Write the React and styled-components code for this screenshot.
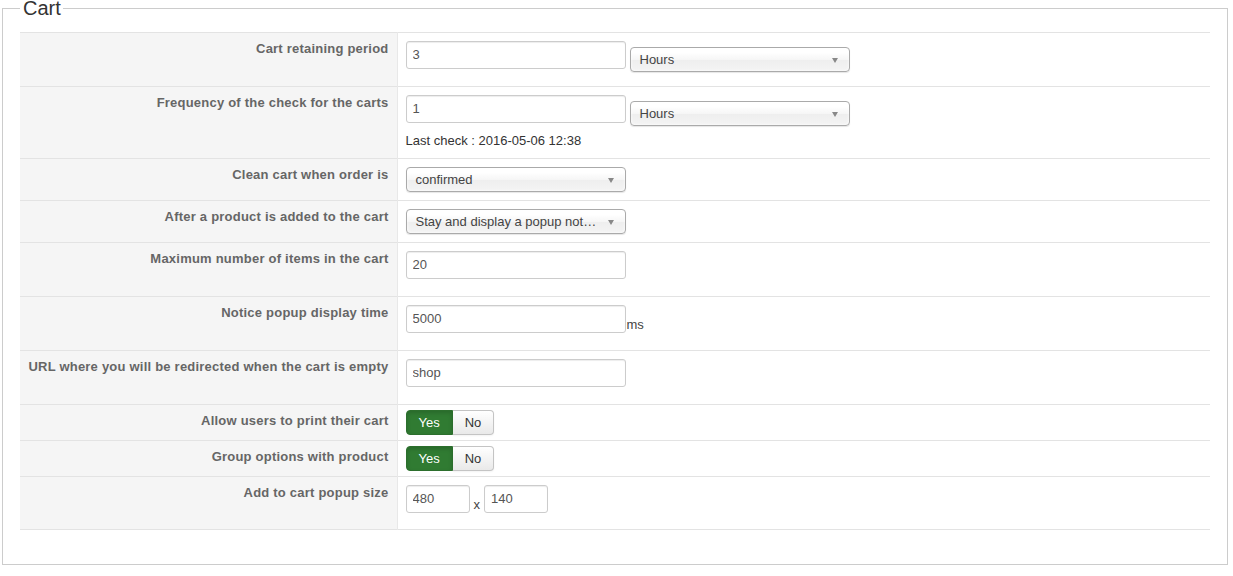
import React from 'react'
import styled, { createGlobalStyle } from 'styled-components'

const GlobalStyle = createGlobalStyle`
  html, body {
    margin: 0;
    padding: 0;
    background: #fff;
  }
  body {
    font-family: Arial, "Liberation Sans", Helvetica, sans-serif;
    font-size: 13px;
    color: #333;
  }
`

const Fieldset = styled.fieldset`
  box-sizing: border-box;
  width: 1226px;
  margin: 0 0 0 2px;
  padding: 15px 17px 34px 17px;
  border: 1px solid #ccc;
  min-width: 0;
`

const Legend = styled.legend`
  padding: 0 2px 0 3px;
  margin-left: 0;
  font-size: 20px;
  line-height: 17px;
  color: #333;
`

const Table = styled.table`
  width: 100%;
  border-collapse: collapse;
  border-bottom: 1px solid #e3e3e3;
`

const Row = styled.tr`
  border-top: 1px solid #e3e3e3;
`

const Key = styled.td`
  box-sizing: border-box;
  width: 377px;
  padding: 8px 8px 8px 4px;
  background: #f5f5f5;
  border-right: 1px solid #e8e8e8;
  text-align: right;
  vertical-align: top;
  white-space: nowrap;
  font-weight: bold;
  font-size: 13px;
  line-height: 15px;
  letter-spacing: 0.22px;
  color: #666;
`

const Value = styled.td`
  padding: ${(p) => (p.$compact ? '5px 8px' : p.$last ? '8px 8px 7px' : '8px')};
  vertical-align: top;
  line-height: 18px;
`

const Line = styled.div`
  display: flex;
  align-items: flex-start;
  gap: ${(p) => p.$gap || 4}px;
`

const TextInput = styled.input`
  box-sizing: border-box;
  width: ${(p) => p.$width || 220}px;
  height: 28px;
  margin: 0 0 9px 0;
  padding: 3px 6px 5px 6px;
  border: 1px solid #ccc;
  border-radius: 3px;
  box-shadow: inset 0 1px 1px rgba(0, 0, 0, 0.075);
  font-family: Arial, "Liberation Sans", sans-serif;
  font-size: 13px;
  line-height: 18px;
  color: #555;
  background: #fff;
  outline: none;
`

const Chosen = styled.div`
  box-sizing: border-box;
  position: relative;
  width: 220px;
  height: 25px;
  margin-top: ${(p) => p.$offset || 0}px;
  padding: 0 28px 0 9px;
  border: 1px solid #aaa;
  border-radius: 4px;
  background: linear-gradient(#fff 20%, #f6f6f6 50%, #eee 52%, #f4f4f4 100%);
  box-shadow: inset 0 0 3px #fff, 0 1px 1px rgba(0, 0, 0, 0.1);
  color: #444;
  font-size: 13px;
  line-height: 23px;
  white-space: nowrap;
  overflow: hidden;
  text-overflow: ellipsis;
  cursor: pointer;

  &::after {
    content: '';
    position: absolute;
    right: 11px;
    top: 10px;
    border-left: 3.5px solid transparent;
    border-right: 3.5px solid transparent;
    border-top: 5px solid #888;
  }
`

const Note = styled.div`
  color: #333;
  font-size: 13px;
  line-height: 18px;
`

const Suffix = styled.span`
  padding-top: ${(p) => p.$top || 0}px;
  color: #444;
  font-size: 13px;
`

const Toggle = styled.div`
  display: inline-flex;
`

const ToggleButton = styled.button`
  box-sizing: border-box;
  height: 25px;
  padding: 0 12px;
  margin: 0;
  font-family: Arial, "Liberation Sans", sans-serif;
  font-size: 13px;
  line-height: 23px;
  cursor: pointer;
  border: 1px solid ${(p) => (p.$active ? '#2c6f2d' : '#c4c4c4')};
  color: ${(p) => (p.$active ? '#fff' : '#333')};
  background: ${(p) =>
    p.$active ? '#307b32' : 'linear-gradient(#fff, #e9e9e9)'};
  box-shadow: ${(p) =>
    p.$active ? 'inset 0 2px 4px rgba(0,0,0,0.15)' : '0 1px 2px rgba(0,0,0,0.05)'};

  &:first-child {
    border-radius: 4px 0 0 4px;
  }
  &:last-child {
    border-radius: 0 4px 4px 0;
    border-left: 0;
  }
`

const YesNo = ({ value = true }) => (
  <Toggle>
    <ToggleButton $active={value}>Yes</ToggleButton>
    <ToggleButton $active={!value}>No</ToggleButton>
  </Toggle>
)

export default function App() {
  return (
    <>
      <GlobalStyle />
      <Fieldset>
        <Legend>Cart</Legend>
        <Table>
          <tbody>
            <Row>
              <Key>Cart retaining period</Key>
              <Value>
                <Line>
                  <TextInput defaultValue="3" />
                  <Chosen $offset={6}>Hours</Chosen>
                </Line>
              </Value>
            </Row>
            <Row>
              <Key>Frequency of the check for the carts</Key>
              <Value>
                <Line>
                  <TextInput defaultValue="1" />
                  <Chosen $offset={6}>Hours</Chosen>
                </Line>
                <Note>Last check : 2016-05-06 12:38</Note>
              </Value>
            </Row>
            <Row>
              <Key>Clean cart when order is</Key>
              <Value>
                <Chosen>confirmed</Chosen>
              </Value>
            </Row>
            <Row>
              <Key>After a product is added to the cart</Key>
              <Value>
                <Chosen>Stay and display a popup notice</Chosen>
              </Value>
            </Row>
            <Row>
              <Key>Maximum number of items in the cart</Key>
              <Value>
                <TextInput defaultValue="20" />
              </Value>
            </Row>
            <Row>
              <Key>Notice popup display time</Key>
              <Value>
                <Line $gap={1}>
                  <TextInput defaultValue="5000" />
                  <Suffix $top={11}>ms</Suffix>
                </Line>
              </Value>
            </Row>
            <Row>
              <Key>URL where you will be redirected when the cart is empty</Key>
              <Value>
                <TextInput defaultValue="shop" />
              </Value>
            </Row>
            <Row>
              <Key>Allow users to print their cart</Key>
              <Value $compact>
                <YesNo value />
              </Value>
            </Row>
            <Row>
              <Key>Group options with product</Key>
              <Value $compact>
                <YesNo value />
              </Value>
            </Row>
            <Row>
              <Key>Add to cart popup size</Key>
              <Value $last>
                <Line $gap={4}>
                  <TextInput $width={64} defaultValue="480" />
                  <Suffix $top={11}>x</Suffix>
                  <TextInput $width={64} defaultValue="140" />
                </Line>
              </Value>
            </Row>
          </tbody>
        </Table>
      </Fieldset>
    </>
  )
}
